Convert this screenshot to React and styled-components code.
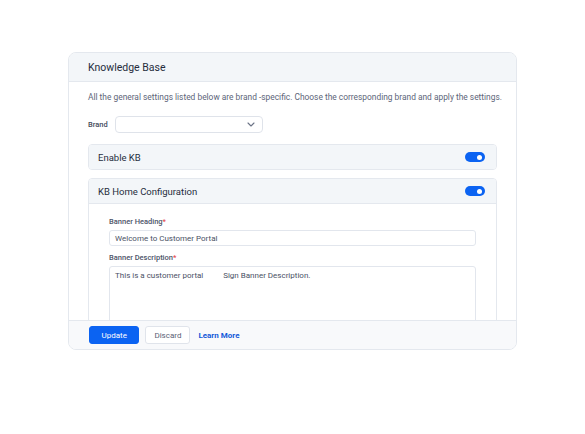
import React from 'react';
import styled, { createGlobalStyle } from 'styled-components';

const GlobalStyle = createGlobalStyle`
  body {
    margin: 0;
    background: #ffffff;
    font-family: Roboto, "Liberation Sans", sans-serif;
  }
`;

const Page = styled.div`
  width: 585px;
  height: 434px;
  padding: 52px 0 0 68px;
  box-sizing: border-box;
`;

const Card = styled.div`
  width: 449px;
  height: 298px;
  box-sizing: border-box;
  border: 1px solid #e4e8ee;
  border-radius: 8px;
  overflow: hidden;
  display: flex;
  flex-direction: column;
  background: #fff;
`;

const CardHeader = styled.div`
  height: 28px;
  flex: none;
  display: flex;
  align-items: center;
  padding-left: 19px;
  background: #f3f6f9;
  border-bottom: 1px solid #e4e8ee;
  color: #262d3d;
  font-size: 10.5px;
  font-weight: 400;
`;

const CardBody = styled.div`
  flex: 1;
  overflow: hidden;
  padding: 0 19px;
`;

const Intro = styled.p`
  margin: 10px 0 0;
  color: #5d6579;
  font-size: 8.4px;
  line-height: 10px;
  white-space: nowrap;
`;

const BrandRow = styled.div`
  display: flex;
  align-items: center;
  gap: 7px;
  margin-top: 14px;
`;

const SmallLabel = styled.span`
  color: #434a5c;
  font-size: 7.5px;
  font-weight: 500;
`;

const Select = styled.div`
  width: 148px;
  height: 17px;
  box-sizing: border-box;
  border: 1px solid #dfe3ea;
  border-radius: 4px;
  display: flex;
  align-items: center;
  justify-content: flex-end;
  padding-right: 7px;
  color: #5d6579;
`;

const Panel = styled.div`
  margin-top: ${p => p.$top}px;
  border: 1px solid #e4e8ee;
  border-radius: 4px;
  overflow: hidden;
`;

const PanelHeader = styled.div`
  height: ${p => p.$h}px;
  display: flex;
  align-items: center;
  justify-content: space-between;
  padding: 0 11px 0 9px;
  background: #f3f6f9;
  color: #262d3d;
  font-size: 9.5px;
  border-bottom: ${p => (p.$open ? '1px solid #e4e8ee' : 'none')};
`;

const Toggle = styled.span`
  width: 20px;
  height: 10px;
  border-radius: 5px;
  background: #0b63f2;
  display: flex;
  align-items: center;
  justify-content: flex-end;
  padding-right: 3px;
  box-sizing: border-box;

  &::after {
    content: '';
    width: 5px;
    height: 5px;
    border-radius: 50%;
    background: #fff;
  }
`;

const PanelBody = styled.div`
  padding: 13px 20px 0 20px;
`;

const FieldLabel = styled.div`
  color: #4d5468;
  font-size: 7.5px;
  font-weight: 500;
  margin-top: ${p => p.$top || 0}px;
  margin-bottom: 4px;

  span {
    color: #e5484d;
  }
`;

const Input = styled.div`
  height: 16px;
  box-sizing: border-box;
  border: 1px solid #e2e6ed;
  border-radius: 3px;
  display: flex;
  align-items: center;
  padding-left: 5px;
  color: #4a5165;
  font-size: 8px;
`;

const TextArea = styled.div`
  height: 70px;
  margin-top: 1px;
  box-sizing: border-box;
  border: 1px solid #e2e6ed;
  border-radius: 3px;
  padding: 4px 5px;
  color: #4a5165;
  font-size: 8px;
  white-space: pre;
`;

const Footer = styled.div`
  height: 28px;
  flex: none;
  display: flex;
  align-items: center;
  gap: 6px;
  padding-left: 20px;
  background: #f8f9fb;
  border-top: 1px solid #e4e8ee;
`;

const Button = styled.button`
  height: 18px;
  padding: 0 ${p => (p.$primary ? 11.5 : 8)}px;
  border-radius: 3px;
  border: 1px solid ${p => (p.$primary ? '#0b63f2' : '#e0e4eb')};
  background: ${p => (p.$primary ? '#0b63f2' : '#ffffff')};
  color: ${p => (p.$primary ? '#ffffff' : '#5a6175')};
  font-family: inherit;
  font-size: 8px;
  font-weight: 400;
`;

const LearnMore = styled.a`
  margin-left: 2px;
  color: #1459d9;
  font-size: 8px;
  font-weight: 700;
  text-decoration: none;
`;

const Chevron = () => (
  <svg width="8" height="5" viewBox="0 0 8 5" fill="none">
    <path d="M1 1l3 3 3-3" stroke="#6b7386" strokeWidth="1.1" strokeLinecap="round" strokeLinejoin="round" />
  </svg>
);

export default function App() {
  return (
    <>
      <GlobalStyle />
      <Page>
        <Card>
          <CardHeader>Knowledge Base</CardHeader>
          <CardBody>
            <Intro>
              All the general settings listed below are brand -specific. Choose the corresponding brand and apply the settings.
            </Intro>
            <BrandRow>
              <SmallLabel>Brand</SmallLabel>
              <Select>
                <Chevron />
              </Select>
            </BrandRow>
            <Panel $top={11}>
              <PanelHeader $h={24}>
                Enable KB
                <Toggle />
              </PanelHeader>
            </Panel>
            <Panel $top={8}>
              <PanelHeader $h={24} $open>
                KB Home Configuration
                <Toggle />
              </PanelHeader>
              <PanelBody>
                <FieldLabel>
                  Banner Heading<span>*</span>
                </FieldLabel>
                <Input>Welcome to Customer Portal</Input>
                <FieldLabel $top={7}>
                  Banner Description<span>*</span>
                </FieldLabel>
                <TextArea>{'This is a customer portal          Sign Banner Description.'}</TextArea>
              </PanelBody>
            </Panel>
          </CardBody>
          <Footer>
            <Button $primary>Update</Button>
            <Button>Discard</Button>
            <LearnMore href="#">Learn More</LearnMore>
          </Footer>
        </Card>
      </Page>
    </>
  );
}
